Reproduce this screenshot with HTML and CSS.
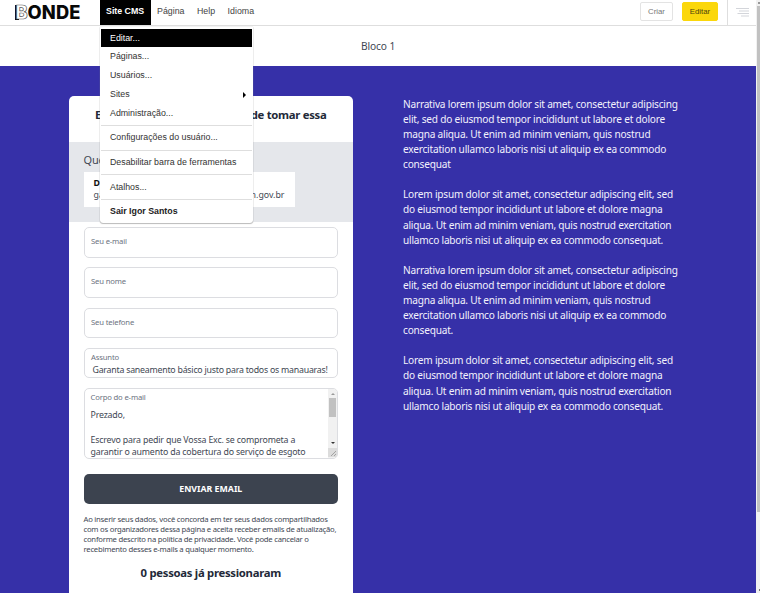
FILE: index.html
```html
<!DOCTYPE html>
<html lang="pt-BR">
<head>
<meta charset="utf-8">
<title>Bonde</title>
<link rel="stylesheet" href="styles.css">
</head>
<body>
<div class="page">
  <header class="topbar">
    <div class="logo"><span class="logo-b">B</span><span>ONDE</span></div>
    <nav class="nav">
      <div class="nav-item active">Site CMS
        <div class="menu">
          <div class="menu-item selected">Editar...</div>
          <div class="menu-item">Páginas...</div>
          <div class="menu-item">Usuários...</div>
          <div class="menu-item">Sites<i class="arrow"></i></div>
          <div class="menu-item last">Administração...</div>
          <div class="menu-item split">Configurações do usuário...</div>
          <div class="menu-item split">Desabilitar barra de ferramentas</div>
          <div class="menu-item split">Atalhos...</div>
          <div class="menu-item split strong">Sair Igor Santos</div>
        </div>
      </div>
      <div class="nav-item">Página</div>
      <div class="nav-item">Help</div>
      <div class="nav-item">Idioma</div>
    </nav>
    <div class="actions">
      <button class="btn">Criar</button>
      <button class="btn primary">Editar</button>
    </div>
    <div class="toggle">
      <svg width="13" height="9" viewBox="0 0 13 9" stroke="#d3d5da" stroke-width="1"><path d="M0 .5H13M3 3H13M1.500 5.500H13M5 8H13"/></svg>
    </div>
  </header>
  <div class="block-title">Bloco 1</div>
  <main class="content">
    <section class="card">
      <h2 class="card-title"><span>E</span><span>de tomar essa</span></h2>
      <div class="targets">
        <div class="targets-label">Que</div>
        <div class="target">
          <b>D</b>
          <div class="target-mail"><span>ga</span><span>m.gov.br</span></div>
        </div>
      </div>
      <form class="form">
        <div class="field">Seu e-mail</div>
        <div class="field">Seu nome</div>
        <div class="field">Seu telefone</div>
        <div class="field filled"><span>Assunto</span><p class="subject">Garanta saneamento básico justo para todos os manauaras!</p></div>
        <div class="field area">
          <div class="area-text"><span>Corpo do e-mail</span><p>Prezado,<br><br>Escrevo para pedir que Vossa Exc. se comprometa a<br>garantir o aumento da cobertura do serviço de esgoto</p></div>
          <div class="scroll">
            <i class="up"></i><i class="thumb"></i><i class="down"></i>
            <svg class="grip" width="9" height="9" viewBox="0 0 9 9" stroke="#888" stroke-width=".7"><path d="M3 8L8 3M6 8L8 6"/></svg>
          </div>
        </div>
        <button class="submit" type="button">ENVIAR EMAIL</button>
        <p class="legal">Ao inserir seus dados, você concorda em ter seus dados compartilhados<br>com os organizadores dessa página e aceita receber emails de atualização,<br>conforme descrito na política de privacidade. Você pode cancelar o<br>recebimento desses e-mails a qualquer momento.</p>
        <div class="count">0 pessoas já pressionaram</div>
      </form>
    </section>
    <section class="story">
      <p>Narrativa lorem ipsum dolor sit amet, consectetur adipiscing<br>elit, sed do eiusmod tempor incididunt ut labore et dolore<br>magna aliqua. Ut enim ad minim veniam, quis nostrud<br>exercitation ullamco laboris nisi ut aliquip ex ea commodo<br>consequat</p>
      <p>Lorem ipsum dolor sit amet, consectetur adipiscing elit, sed<br>do eiusmod tempor incididunt ut labore et dolore magna<br>aliqua. Ut enim ad minim veniam, quis nostrud exercitation<br>ullamco laboris nisi ut aliquip ex ea commodo consequat.</p>
      <p>Narrativa lorem ipsum dolor sit amet, consectetur adipiscing<br>elit, sed do eiusmod tempor incididunt ut labore et dolore<br>magna aliqua. Ut enim ad minim veniam, quis nostrud<br>exercitation ullamco laboris nisi ut aliquip ex ea commodo<br>consequat.</p>
      <p>Lorem ipsum dolor sit amet, consectetur adipiscing elit, sed<br>do eiusmod tempor incididunt ut labore et dolore magna<br>aliqua. Ut enim ad minim veniam, quis nostrud exercitation<br>ullamco laboris nisi ut aliquip ex ea commodo consequat.</p>
    </section>
  </main>
</div>
<div class="page-scroll"><i class="page-up"></i><i class="page-thumb"></i><i class="page-down"></i></div>
</body>
</html>
```
FILE: styles.css
```css
* { box-sizing: border-box; }
body {
  margin: 0;
  display: flex;
  width: 760px;
  height: 593px;
  overflow: hidden;
  background: #fff;
  font-family: "Noto Sans", "Open Sans", sans-serif;
  color: #414753;
}
p, h2 { margin: 0; }
button { font: inherit; padding: 0; }
.page { width: 756px; height: 593px; display: flex; flex-direction: column; overflow: hidden; }

.topbar {
  height: 26px;
  flex: none;
  display: flex;
  border-bottom: 1px solid #dedede;
  font: 8.82px/25px "Liberation Sans", Arial, sans-serif;
  color: #444;
}
.logo {
  display: flex;
  align-items: center;
  width: 100px;
  height: 24px;
  padding-left: 15px;
  font: 800 18.3px/24px Inter, sans-serif;
  letter-spacing: .15px;
  color: #080808;
}
.logo-b {
  width: 12.5px;
  height: 15px;
  border: solid #111;
  border-width: 1px 0 1px 2px;
  border-image: linear-gradient(90deg, #111 35%, transparent 35%) 1 0 1 2;
  line-height: 13px;
  letter-spacing: 0;
  color: #fff;
  -webkit-text-stroke: .7px #555;
  text-indent: -1.5px;
}
.nav { display: flex; flex: 1; }
.nav-item { padding: 0 6px; height: 25px; line-height: 23px; margin-right: .5px; white-space: nowrap; }
.nav-item.active { position: relative; width: 51px; margin-right: 0; background: #000; color: #fff; font-weight: bold; }
.menu {
  position: absolute;
  z-index: 2;
  left: 0;
  top: 27px;
  width: 153px;
  height: 196px;
  padding: 1.5px 1px 0;
  background: #fff;
  border-radius: 0 0 3px 3px;
  box-shadow: 0 1px 1px #8888, 0 0 1px #888;
  color: #333;
  font-weight: normal;
}
.menu-item { display: flex; align-items: center; justify-content: space-between; height: 18.9px; padding: 0 6px 0 9px; line-height: 18.9px; }
.menu-item.selected { background: #000; color: #fff; }
.menu-item.last { margin-bottom: 2.2px; }
.menu-item.split { height: 24.6px; border-top: 1px solid #dedede; }
.menu-item.strong { font-weight: bold; color: #222; }
.arrow { border: 3px solid transparent; border-left-color: #000; border-right: 0; }
.actions { display: flex; gap: 9px; padding: 2px 9px 0 0; }
.btn { width: 33px; height: 19px; border: 1px solid #e3e3e3; border-radius: 2px; background: #fff; color: #777; font-size: 7.8px; line-height: 17px; }
.btn.primary { width: 36px; border-color: #fbd70b; background: #fbd70b; color: #4b430f; }
.toggle { width: 29px; border-left: 1px solid #dedede; padding: 8px 0 0 8px; line-height: 0; }

.block-title { height: 40px; flex: none; line-height: 40px; text-align: center; font-size: 10.2px; letter-spacing: -.1px; }
.content { flex: 1; display: flex; align-items: flex-start; padding: 30px 0 0 68.5px; gap: 50px; background: #3630a8; }

.card { width: 284.5px; height: 520px; flex: none; background: #fff; border-radius: 5px; overflow: hidden; }
.card-title { display: flex; justify-content: space-between; height: 45.5px; padding: 0 26.5px; font-size: 11.3px; line-height: 38px; letter-spacing: -.28px; color: #222938; }
.targets { height: 80.5px; padding: 10px 15px 0; background: #e5e7eb; }
.targets-label { height: 20.5px; font-size: 11px; line-height: 16px; letter-spacing: -.2px; }
.target { width: 211px; height: 35px; padding: 5.4px 10px 0; background: #fff; font-size: 8.8px; line-height: 12px; }
.target b { display: block; color: #111; }
.target-mail { display: flex; justify-content: space-between; }
.form { padding: 5px 15px 0; }
.field {
  height: 30.5px;
  margin-bottom: 9.8px;
  padding: 0 6.5px;
  border: 1px solid #dcdde1;
  border-radius: 5px;
  font-size: 7.7px;
  line-height: 27.5px;
  letter-spacing: -.17px;
  color: #6b7280;
}
.field.filled { line-height: 12.6px; padding-top: 2.2px; }
.field p { color: #414753; font-size: 8.8px; letter-spacing: -.17px; white-space: nowrap; }
.field .subject { padding-left: 1.500px; letter-spacing: -.235px; }
.field.area { display: flex; height: 71px; padding: 0; margin-bottom: 15px; overflow: hidden; line-height: 12px; }
.area-text { flex: 1; padding: 2.2px 0 0 6px; }
.area-text p { margin-top: 5.3px; line-height: 12.6px; }
.scroll { display: flex; flex-direction: column; align-items: center; width: 9px; background: #f1f1f1; }
.up, .down { border: 2.5px solid transparent; }
.up { border-bottom-color: #999; border-top: 0; margin-top: 4px; }
.thumb { width: 7px; height: 19px; margin-top: 3px; background: #c1c1c1; }
.down { border-top-color: #333; border-bottom: 0; margin: 25px 0 4px; }
.grip { background: #dcdcdc; }
.submit { display: block; width: 100%; height: 30px; border: 0; border-radius: 5px; background: #3c434f; color: #fff; font-size: 8.8px; font-weight: bold; }
.legal { margin-top: 9.5px; font-size: 7.7px; line-height: 10.1px; letter-spacing: -.235px; white-space: nowrap; }
.count { margin-top: 10px; text-align: center; font-size: 11.3px; line-height: 18px; font-weight: bold; letter-spacing: -.28px; color: #222938; }

.story { padding-top: .8px; font-size: 10.1px; line-height: 15.1px; letter-spacing: -.205px; color: #f3f2fc; white-space: nowrap; }
.story p { margin-bottom: 15.1px; }

.page-scroll { display: flex; flex-direction: column; align-items: flex-end; width: 4px; height: 593px; background: #f1f1f1; }
.page-up { width: 2px; height: 2px; margin-top: 2px; background: #999; }
.page-thumb { width: 3px; height: 506px; margin-top: 2px; background: #c1c1c1; }
.page-down { width: 1px; height: 2px; margin-top: 77px; background: #777; }
```
